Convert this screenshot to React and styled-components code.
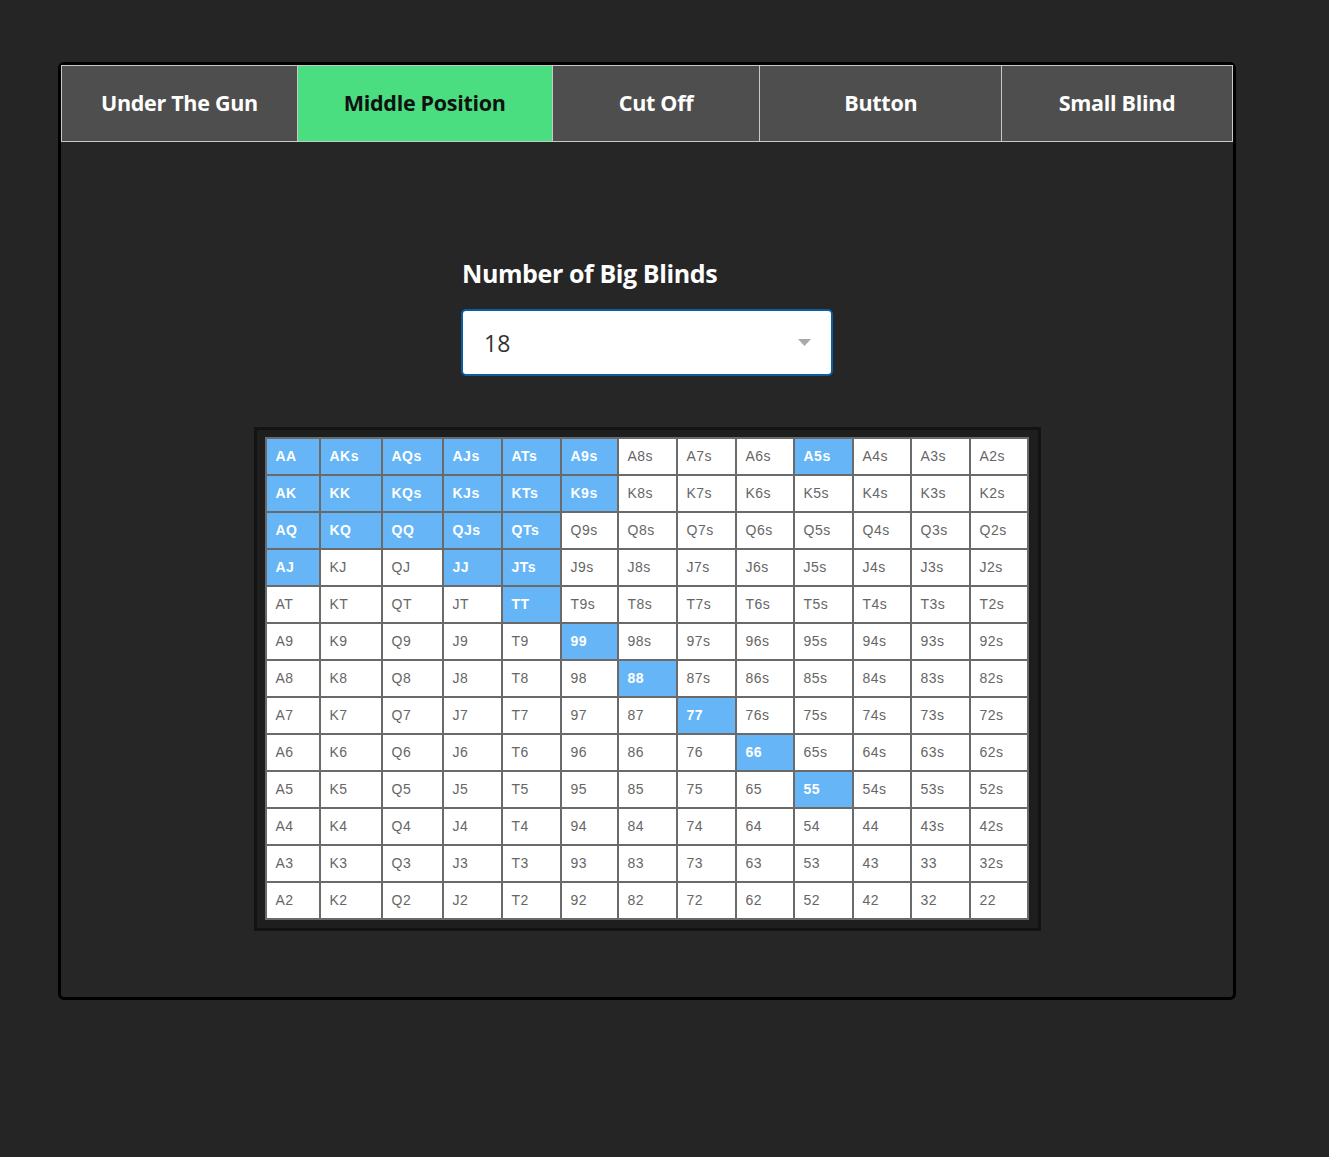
import React, { useState } from "react";
import styled, { createGlobalStyle } from "styled-components";

const GlobalStyle = createGlobalStyle`
  body {
    margin: 0;
    background-color: #252525;
    font-family: "Open Sans", sans-serif;
  }
`;

const Page = styled.div`
  padding: 62px 0 150px 58px;
`;

const Panel = styled.div`
  width: 1172px;
  border: 3px solid #000;
  border-radius: 6px;
  background-color: #262626;
  display: flex;
  flex-direction: column;
`;

const TabBar = styled.div`
  display: grid;
  grid-template-columns: 235fr 255fr 208fr 242fr 231fr;
  border: 1px solid #c9c9c9;
  height: 75px;
`;

const Tab = styled.div`
  display: flex;
  align-items: center;
  justify-content: center;
  padding-bottom: 2px;
  font-size: 21.5px;
  font-weight: 700;
  letter-spacing: -0.3px;
  color: ${(p) => (p.active ? "#111" : "#fff")};
  background-color: ${(p) => (p.active ? "#4ade80" : "#4e4e4e")};
  border-left: ${(p) => (p.first ? "none" : "1px solid #c9c9c9")};
  cursor: pointer;
`;

const Content = styled.div`
  display: flex;
  flex-direction: column;
  align-items: center;
  padding: 116px 0 66px;
`;

const Field = styled.div`
  width: 372px;
  display: flex;
  flex-direction: column;
  gap: 21px;
`;

const Label = styled.div`
  font-size: 25px;
  line-height: 30px;
  font-weight: 700;
  letter-spacing: -0.4px;
  color: #fff;
  padding-left: 1px;
`;

const SelectBox = styled.div`
  height: 63px;
  border: 2px solid #0b5d9e;
  border-radius: 5px;
  background-color: #fff;
  display: flex;
  align-items: center;
  justify-content: space-between;
  padding: 0 20px 0 21px;
  font-size: 23px;
  color: #333;
`;

const Frame = styled.div`
  margin-top: 51px;
  border: 3px solid #131313;
  background-color: #1e1e1e;
  padding: 7px 9px 8px 8px;
`;

const Chart = styled.div`
  display: grid;
  grid-template-columns: 52px 60px 59px 57px 57px 55px 57px 57px 56px 57px 56px 57px 56px;
  grid-auto-rows: 35px;
  gap: 2px;
  padding: 2px;
  background-color: #6a6a6a;
`;

const Cell = styled.div`
  display: flex;
  align-items: center;
  padding: 0 0 1px 9px;
  font-family: "Liberation Sans", Arial, sans-serif;
  font-size: 14px;
  letter-spacing: 0.5px;
  font-weight: ${(p) => (p.on ? 700 : 400)};
  color: ${(p) => (p.on ? "#fff" : "#666")};
  background-color: ${(p) => (p.on ? "#66b6f7" : "#fff")};
`;

const tabs = ["Under The Gun", "Middle Position", "Cut Off", "Button", "Small Blind"];
const ranks = ["A", "K", "Q", "J", "T", "9", "8", "7", "6", "5", "4", "3", "2"];

// selected hands per row, by column index
const range = [
  [0, 1, 2, 3, 4, 5, 9],
  [0, 1, 2, 3, 4, 5],
  [0, 1, 2, 3, 4],
  [0, 3, 4],
  [4],
  [5],
  [6],
  [7],
  [8],
  [9],
  [],
  [],
  [],
];

function handName(i, j) {
  if (i === j) return ranks[i] + ranks[j];
  if (j > i) return ranks[i] + ranks[j] + "s";
  return ranks[j] + ranks[i];
}

function App() {
  const [active, setActive] = useState(1);

  return (
    <Page>
      <GlobalStyle />
      <Panel>
        <TabBar>
          {tabs.map((t, i) => (
            <Tab key={t} first={i === 0} active={i === active} onClick={() => setActive(i)}>
              {t}
            </Tab>
          ))}
        </TabBar>
        <Content>
          <Field>
            <Label>Number of Big Blinds</Label>
            <SelectBox>
              <span>18</span>
              <svg width="13" height="7" viewBox="0 0 13 7">
                <path d="M0 0 L13 0 L6.5 7 Z" fill="#a9a9a9" />
              </svg>
            </SelectBox>
          </Field>
          <Frame>
            <Chart>
              {ranks.map((_, i) =>
                ranks.map((_, j) => (
                  <Cell key={i + "-" + j} on={range[i].includes(j)}>
                    {handName(i, j)}
                  </Cell>
                ))
              )}
            </Chart>
          </Frame>
        </Content>
      </Panel>
    </Page>
  );
}

export default App;
